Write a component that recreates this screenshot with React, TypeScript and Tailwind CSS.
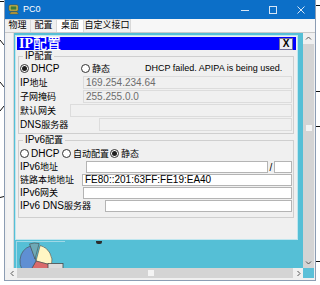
import type { ReactNode } from "react";

const Zh = ({ children }: { children: ReactNode }) => (
  <span className="text-[9px]">{children}</span>
);

function Radio({ checked }: { checked?: boolean }): React.ReactElement {
  return (
    <span className="flex h-[9px] w-[9px] shrink-0 items-center justify-center rounded-full border border-[#333] bg-white">
      {checked && <span className="h-[5px] w-[5px] rounded-full bg-[#1e1e1e]" />}
    </span>
  );
}

function Input({
  value,
  disabled,
  className = "flex-1",
}: {
  value?: string;
  disabled?: boolean;
  className?: string;
}): React.ReactElement {
  return (
    <div
      className={`flex h-full items-center overflow-hidden whitespace-nowrap border px-[2px] leading-none ${className} ${
        disabled
          ? "border-[#dcdcdc] bg-[#f0f0f0] text-[#6d6d6d]"
          : "border-[#b4b4b4] bg-white text-black"
      }`}
    >
      {value}
    </div>
  );
}

function PcIcon(): React.ReactElement {
  return (
    <svg width="12" height="11" viewBox="0 0 12 11">
      <rect x="1" y="1" width="9" height="6" rx="1" fill="#e9c85a" stroke="#5a5a2a" strokeWidth="0.8" />
      <rect x="2.5" y="2.3" width="6" height="3.4" fill="#3f7a3a" />
      <path d="M3 8 L9 8 L10.5 10 L1.5 10 Z" fill="#c9a640" stroke="#5a5a2a" strokeWidth="0.6" />
    </svg>
  );
}

function PieIcon(): React.ReactElement {
  return (
    <svg width="49" height="34" viewBox="0 0 49 34">
      <path d="M19 19 L23.14 3.55 A16 16 0 0 1 34.45 23.14 Z" fill="#fff6c4" stroke="#4a4a4a" strokeWidth="0.6" />
      <path d="M19 19 L34.45 23.14 A16 16 0 0 1 11 32.86 Z" fill="#d96a6c" stroke="#4a4a4a" strokeWidth="0.6" />
      <path d="M19 19 L11 32.86 A16 16 0 0 1 13.53 3.96 Z" fill="#5f8fd3" stroke="#4a4a4a" strokeWidth="0.6" />
      <path d="M18 17 L12.53 1.96 A16 16 0 0 1 22.14 1.55 Z" fill="#6ea9b6" stroke="#4a4a4a" strokeWidth="0.6" />
      <rect x="31" y="21.5" width="15" height="11" fill="#dcdcdc" stroke="#4a4a4a" strokeWidth="0.8" />
    </svg>
  );
}

function Chevron({ d }: { d: string }): React.ReactElement {
  return (
    <svg width="7" height="7" viewBox="0 0 7 7">
      <path d={d} fill="none" stroke="#555" strokeWidth="1" />
    </svg>
  );
}

export default function App(): React.ReactElement {
  return (
    <div className="relative flex h-[285px] w-[320px] overflow-hidden bg-white font-['Liberation_Sans','Noto_Sans_CJK_SC',sans-serif] text-[10px] text-black">
      {/* topology links behind the window */}
      <svg className="pointer-events-none absolute inset-0" width="320" height="285">
        <g stroke="#111" strokeWidth="1">
          <line x1="0" y1="1.5" x2="4" y2="1.5" />
          <line x1="0" y1="40" x2="4" y2="45" />
          <line x1="0" y1="82" x2="4" y2="87" />
          <line x1="0" y1="111" x2="4" y2="106" />
          <line x1="0" y1="197.5" x2="4" y2="196.5" />
          <line x1="315" y1="5.5" x2="320" y2="5.5" />
          <line x1="315" y1="91.5" x2="320" y2="91.5" />
          <line x1="315" y1="126.5" x2="320" y2="126.5" />
          <line x1="315" y1="261.5" x2="320" y2="261.5" />
        </g>
      </svg>

      <div className="relative ml-[4px] flex h-[281px] w-[312px] flex-col border-x border-b border-[#8c9db3] bg-[#f0f0f0]">
        {/* Title bar */}
        <div className="flex h-[19px] shrink-0 items-center bg-[#0c6fc8] pl-[3px] text-white">
          <PcIcon />
          <span className="ml-[3px] text-[9px]">PC0</span>
          <div className="ml-auto flex items-center gap-[20px] pr-[10px]">
            <svg width="8" height="8" viewBox="0 0 8 8">
              <line x1="0" y1="4.5" x2="8" y2="4.5" stroke="#d6e6f6" />
            </svg>
            <svg width="8" height="8" viewBox="0 0 8 8">
              <rect x="0.5" y="0.5" width="7" height="7" fill="none" stroke="#d6e6f6" />
            </svg>
            <svg width="8" height="8" viewBox="0 0 8 8">
              <path d="M0.5 0.5 L7.5 7.5 M7.5 0.5 L0.5 7.5" stroke="#d6e6f6" />
            </svg>
          </div>
        </div>

        {/* Tabs */}
        <div className="flex h-[13px] shrink-0 bg-[#f7f7f7]">
          <div className="flex w-[26px] items-center justify-center border-r border-t border-[#d9d9d9] bg-[#f0f0f0]">
            <Zh>物理</Zh>
          </div>
          <div className="flex w-[26px] items-center justify-center border-r border-t border-[#d9d9d9] bg-[#f0f0f0]">
            <Zh>配置</Zh>
          </div>
          <div className="flex w-[27px] items-center justify-center border-r border-t border-[#d9d9d9] bg-white">
            <Zh>桌面</Zh>
          </div>
          <div className="flex w-[47px] items-center justify-center border-r border-t border-[#d9d9d9] bg-[#f0f0f0]">
            <Zh>自定义接口</Zh>
          </div>
        </div>

        {/* Content */}
        <div className="flex flex-1 flex-col border-t border-[#c9c9c9] pb-[2px] pl-[2px] pr-[1px]">
          <div className="grid h-[245px] grid-cols-[1fr_11px] grid-rows-[1fr_10px]">
            {/* Canvas */}
            <div className="flex overflow-hidden">
              <div className="w-[7px] shrink-0 border-r border-[#d8d8d8] bg-[#f3f3f3]" />
              <div className="flex flex-1 flex-col overflow-hidden bg-[#55bfd6]">
                {/* IP config dialog */}
                <div className="ml-[1px] mt-[2px] flex h-[205px] w-[283px] shrink-0 flex-col border border-[#bfe6ef] bg-[#f0f0f0] p-[1px]">
                  <div className="flex h-[13px] shrink-0 items-center bg-[#0000ff] pl-[2px] text-white">
                    <span className="whitespace-nowrap font-['Liberation_Serif','Noto_Sans_CJK_SC',serif] text-[14px] font-bold leading-[13px]">
                      IP<span className="font-medium">配置</span>
                    </span>
                    <div className="ml-auto mr-[3px] flex h-[12px] w-[14px] items-center justify-center border border-[#6f6f9c] bg-[#ececf2] text-[10px] font-bold leading-none text-black">
                      X
                    </div>
                  </div>

                  <div className="flex flex-col pl-[1px] pr-[2px]">
                    {/* IPv4 */}
                    <fieldset className="border border-[#cfcfcf] pb-[2px] pl-[1px] pr-[1px]">
                      <legend className="ml-[3px] px-[2px] leading-[11px]">
                        IP<Zh>配置</Zh>
                      </legend>
                      <div className="flex flex-col gap-[1px]">
                        <div className="flex h-[13px] items-center">
                          <div className="flex w-[61px] items-center">
                            <Radio checked />
                            <span className="ml-[2px]">DHCP</span>
                          </div>
                          <div className="flex w-[64px] items-center">
                            <Radio />
                            <span className="ml-[2px]">
                              <Zh>静态</Zh>
                            </span>
                          </div>
                          <span className="whitespace-nowrap text-[9px]">
                            DHCP failed. APIPA is being used.
                          </span>
                        </div>
                        <div className="flex h-[13px] items-center">
                          <div className="w-[63px]">
                            IP<Zh>地址</Zh>
                          </div>
                          <Input value="169.254.234.64" disabled />
                        </div>
                        <div className="flex h-[13px] items-center">
                          <div className="w-[63px]">
                            <Zh>子网掩码</Zh>
                          </div>
                          <Input value="255.255.0.0" disabled />
                        </div>
                        <div className="flex h-[13px] items-center">
                          <div className="w-[50px]">
                            <Zh>默认网关</Zh>
                          </div>
                          <Input disabled />
                        </div>
                        <div className="flex h-[13px] items-center">
                          <div className="w-[79px]">
                            DNS<Zh>服务器</Zh>
                          </div>
                          <Input disabled />
                        </div>
                      </div>
                    </fieldset>

                    {/* IPv6 */}
                    <fieldset className="border border-[#cfcfcf] pb-[5px] pl-[1px] pr-[1px]">
                      <legend className="ml-[3px] px-[2px] leading-[11px]">
                        IPv6<Zh>配置</Zh>
                      </legend>
                      <div className="flex flex-col gap-[1px] pt-[1px]">
                        <div className="flex h-[13px] items-center">
                          <div className="flex w-[42px] items-center">
                            <Radio />
                            <span className="ml-[2px]">DHCP</span>
                          </div>
                          <div className="flex w-[48px] items-center">
                            <Radio />
                            <span className="ml-[2px]">
                              <Zh>自动配置</Zh>
                            </span>
                          </div>
                          <div className="flex items-center">
                            <Radio checked />
                            <span className="ml-[2px]">
                              <Zh>静态</Zh>
                            </span>
                          </div>
                        </div>
                        <div className="flex h-[12px] items-center">
                          <div className="w-[66px]">
                            IPv6<Zh>地址</Zh>
                          </div>
                          <Input className="w-[182px]" />
                          <span className="w-[6px] text-center">/</span>
                          <Input className="flex-1" />
                        </div>
                        <div className="flex h-[12px] items-center">
                          <div className="w-[62px]">
                            <Zh>链路本地地址</Zh>
                          </div>
                          <Input value="FE80::201:63FF:FE19:EA40" />
                        </div>
                        <div className="flex h-[12px] items-center">
                          <div className="w-[63px]">
                            IPv6<Zh>网关</Zh>
                          </div>
                          <Input />
                        </div>
                        <div className="flex h-[12px] items-center">
                          <div className="w-[85px]">
                            IPv6 DNS<Zh>服务器</Zh>
                          </div>
                          <Input />
                        </div>
                      </div>
                    </fieldset>
                  </div>
                </div>

                {/* desktop icons peeking below the dialog */}
                <div className="flex shrink-0 items-start">
                  <div className="ml-[2px] mt-[1px] h-[34px] w-[49px] shrink-0 border-l border-t border-[#9fd8e6]">
                    <PieIcon />
                  </div>
                  <div className="ml-[31px] mt-[1px] h-[3px] w-[6px] rounded-b-[2px] bg-[#2c2c2c]" />
                </div>
              </div>
            </div>

            {/* Vertical scrollbar */}
            <div className="flex flex-col bg-[#d4d4d4]">
              <div className="flex h-[11px] items-center justify-center bg-[#f0f0f0]">
                <Chevron d="M1 4.5 L3.5 2 L6 4.5" />
              </div>
              <div className="flex-1">
                <div className="mx-auto mt-[81px] h-[6px] w-[6px] bg-[#f4f4f4]" />
              </div>
              <div className="flex h-[11px] items-center justify-center">
                <Chevron d="M1 2.5 L3.5 5 L6 2.5" />
              </div>
            </div>

            {/* Horizontal scrollbar */}
            <div className="flex bg-[#d4d4d4]">
              <div className="flex w-[10px] items-center justify-center bg-[#f0f0f0]">
                <Chevron d="M4.5 1 L2 3.5 L4.5 6" />
              </div>
              <div className="flex flex-1 items-center">
                <div className="ml-[131px] h-[6px] w-[6px] bg-[#f4f4f4]" />
              </div>
              <div className="flex w-[10px] items-center justify-center bg-[#f0f0f0]">
                <Chevron d="M2.5 1 L5 3.5 L2.5 6" />
              </div>
            </div>

            <div className="bg-[#5bc0d8]" />
          </div>
        </div>
      </div>
    </div>
  );
}
